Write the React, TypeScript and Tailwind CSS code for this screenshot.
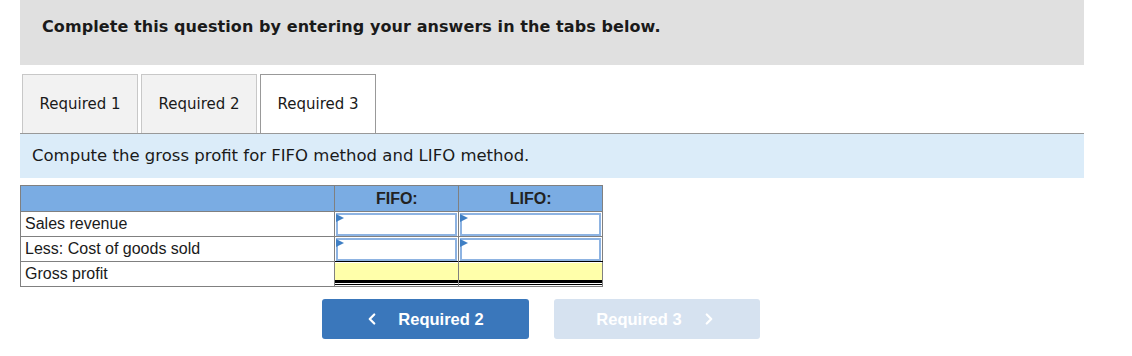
import { ChevronLeft, ChevronRight } from 'lucide-react';

const rows = ['Sales revenue', 'Less: Cost of goods sold'];

function Flag() {
  return (
    <span className="absolute left-px top-[2px] w-0 h-0 border-t-[4px] border-b-[4px] border-l-[8px] border-t-transparent border-b-transparent border-l-[#3f7fc4]" />
  );
}

function InputCell({ last }: { last?: boolean }) {
  return (
    <td className={`relative p-0 h-[25px] border-t border-[#808080] ${last ? '' : 'border-r'}`}>
      <div className="mx-px h-[23px] border-2 border-[#8db3e2] bg-white" />
      <Flag />
    </td>
  );
}

export default function App() {
  return (
    <div className="w-[1132px] h-[356px] bg-white text-[#1a1a1a]">
      <div className="ml-[20px] w-[1064px]">
        <div className="h-[65px] bg-[#e0e0e0] pl-[22px] pt-[15px] font-['DejaVu_Sans',Verdana,sans-serif] text-[16px] font-bold tracking-[0.08px]">
          Complete this question by entering your answers in the tabs below.
        </div>

        <div className="mt-[9px] flex gap-[3px] pl-[2px] font-['DejaVu_Sans',Verdana,sans-serif] text-[15px]">
          {['Required 1', 'Required 2', 'Required 3'].map((t, i) => (
            <div
              key={t}
              className={`w-[116px] h-[59px] pt-px flex items-center justify-center border border-b-0 ${
                i === 2 ? 'bg-white border-[#999999]' : 'bg-[#f2f2f2] border-[#c8c8c8]'
              }`}
            >
              {t}
            </div>
          ))}
        </div>
        <div className="h-px bg-[#999999]" />

        <div className="h-[44px] bg-[#dbecf9] pl-[12px] flex items-center font-['DejaVu_Sans',Verdana,sans-serif] text-[16.5px]">
          Compute the gross profit for FIFO method and LIFO method.
        </div>

        <table className="mt-[7px] w-[583px] border-collapse border border-[#808080] font-['Liberation_Sans',Arial,sans-serif] text-[16px]">
          <thead>
            <tr className="h-[26px] bg-[#7aace3]">
              <th className="border-r border-[#808080] w-[315px]" />
              <th className="border-r border-[#808080] w-[124px] font-bold text-[#222]">FIFO:</th>
              <th className="w-[144px] font-bold text-[#222]">LIFO:</th>
            </tr>
          </thead>
          <tbody>
            {rows.map((r) => (
              <tr key={r}>
                <td className="h-[25px] border-t border-r border-[#808080] pl-[4px] py-0 leading-none">{r}</td>
                <InputCell />
                <InputCell last />
              </tr>
            ))}
            <tr>
              <td className="h-[25px] border-t border-r border-[#808080] pl-[4px] py-0 leading-none">Gross profit</td>
              <td className="p-0 border-t border-r border-t-black border-r-[#808080] bg-white">
                <div className="h-[20px] bg-[#ffffaa] border-b-[3px] border-black" />
                <div className="h-px mt-px bg-black" />
              </td>
              <td className="p-0 border-t border-t-black bg-white">
                <div className="h-[20px] bg-[#ffffaa] border-b-[3px] border-black" />
                <div className="h-px mt-px bg-black" />
              </td>
            </tr>
          </tbody>
        </table>

        <div className="mt-[12px] ml-[302px] flex gap-[25px] font-['Liberation_Sans',Arial,sans-serif] text-[16.5px] font-bold text-white">
          <button className="w-[207px] h-[40px] rounded-[3px] bg-[#3a77bb] flex items-center justify-center gap-[17px] pr-[4px]">
            <ChevronLeft size={18} strokeWidth={3} />
            <span>Required 2</span>
          </button>
          <button className="w-[206px] h-[40px] rounded-[3px] bg-[#d6e2f0] flex items-center justify-center gap-[18px]">
            <span>Required 3</span>
            <ChevronRight size={18} strokeWidth={3} />
          </button>
        </div>
      </div>
    </div>
  );
}
